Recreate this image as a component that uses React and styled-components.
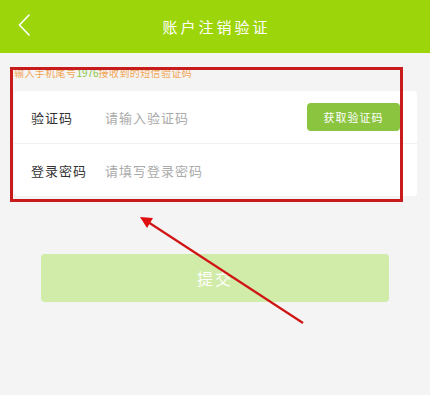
import React from "react";
import styled, { createGlobalStyle } from "styled-components";

const GlobalStyle = createGlobalStyle`
  html, body {
    margin: 0;
    padding: 0;
    background: #f4f4f4;
  }
  body {
    font-family: "Noto Sans CJK SC", "Noto Sans", sans-serif;
  }
`;

const Page = styled.div`
  position: relative;
  width: 430px;
  height: 395px;
  background: #f4f4f4;
  overflow: hidden;
`;

const Header = styled.div`
  position: relative;
  height: 53px;
  background: #9dd50b;
  display: flex;
  align-items: center;
  justify-content: center;
`;

const BackButton = styled.div`
  position: absolute;
  left: 14px;
  top: 11px;
  width: 20px;
  height: 28px;
  display: flex;
  align-items: center;
  justify-content: center;
`;

const Title = styled.h1`
  margin: 0;
  color: #fff;
  font-size: 15px;
  font-weight: 400;
  letter-spacing: 3px;
  padding-left: 3px;
`;

const Hint = styled.p`
  margin: 0;
  height: 38px;
  padding-left: 14px;
  display: flex;
  align-items: center;
  font-size: 10px;
  letter-spacing: 0.4px;
  color: #f2a655;
`;

const Digits = styled.span`
  color: #8cc63f;
  letter-spacing: 0;
`;

const Card = styled.div`
  margin: 0 13px 0 14px;
  background: #fff;
  border-radius: 4px;
`;

const Row = styled.div`
  height: 52px;
  display: flex;
  align-items: center;
  padding: 0 17px;
  border-top: ${(p) => (p.$first ? "none" : "1px solid #f0f0f0")};
`;

const Label = styled.span`
  width: 74px;
  font-size: 13px;
  letter-spacing: 1px;
  color: #333;
`;

const Input = styled.input`
  flex: 1;
  min-width: 0;
  border: none;
  outline: none;
  background: transparent;
  padding: 0;
  font-family: inherit;
  font-size: 13px;
  letter-spacing: 1px;
  color: #333;

  &::placeholder {
    color: #aaa;
  }
`;

const CodeButton = styled.button`
  width: 93px;
  height: 28px;
  border: none;
  border-radius: 4px;
  background: #8bc53f;
  color: #fff;
  font-family: inherit;
  font-size: 11px;
  letter-spacing: 1px;
  padding: 0;
`;

const Submit = styled.button`
  display: block;
  margin: 58px 0 0 41px;
  width: 348px;
  height: 48px;
  border: none;
  border-radius: 4px;
  background: #d1eba8;
  color: #fff;
  font-family: inherit;
  font-size: 16px;
  letter-spacing: 2px;
`;

const Highlight = styled.div`
  position: absolute;
  left: 10px;
  top: 67px;
  width: 387px;
  height: 129px;
  border: 3px solid #c81c1c;
  pointer-events: none;
`;

const Arrow = styled.svg`
  position: absolute;
  left: 0;
  top: 0;
  pointer-events: none;
`;

export default function App() {
  return (
    <>
      <GlobalStyle />
      <Page>
        <Header>
          <BackButton>
            <svg width="12" height="22" viewBox="0 0 12 22">
              <polyline
                points="11,1 1.5,11 11,21"
                fill="none"
                stroke="#fff"
                strokeWidth="1.6"
                strokeLinecap="round"
                strokeLinejoin="round"
              />
            </svg>
          </BackButton>
          <Title>账户注销验证</Title>
        </Header>
        <Hint>
          输入手机尾号<Digits>1976</Digits>接收到的短信验证码
        </Hint>
        <Card>
          <Row $first>
            <Label>验证码</Label>
            <Input placeholder="请输入验证码" />
            <CodeButton>获取验证码</CodeButton>
          </Row>
          <Row>
            <Label>登录密码</Label>
            <Input type="password" placeholder="请填写登录密码" />
          </Row>
        </Card>
        <Submit>提交</Submit>
        <Highlight />
        <Arrow width="430" height="395" viewBox="0 0 430 395">
          <line x1="303" y1="323" x2="148" y2="222" stroke="#d01515" strokeWidth="2.2" />
          <polygon points="140,217 153,218 147,228" fill="#e01010" />
        </Arrow>
      </Page>
    </>
  );
}
